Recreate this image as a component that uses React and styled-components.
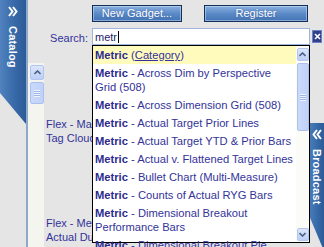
import React from 'react';
import styled, { createGlobalStyle } from 'styled-components';

const GlobalStyle = createGlobalStyle`
  html, body {
    margin: 0;
    padding: 0;
  }
  body {
    width: 324px;
    height: 247px;
    overflow: hidden;
    background: #e5e5e5;
    font-family: "Liberation Sans", Arial, sans-serif;
    font-size: 11px;
  }
  ul {
    margin: 0;
    padding: 0;
    list-style: none;
  }
`;

const options = [
  { rest: ' - Across Dim by Perspective Grid (508)' },
  { rest: ' - Across Dimension Grid (508)' },
  { rest: ' - Actual Target Prior Lines' },
  { rest: ' - Actual Target YTD & Prior Bars' },
  { rest: ' - Actual v. Flattened Target Lines' },
  { rest: ' - Bullet Chart (Multi-Measure)' },
  { rest: ' - Counts of Actual RYG Bars' },
  { rest: ' - Dimensional Breakout Performance Bars' },
  { rest: ' - Dimensional Breakout Pie (508)' },
];

const gadgets = ['Flex - Map Tag Cloud', 'Flex - Metric Actual Dual Bars'];

const Chevrons = ({ left }) => (
  <svg width="10" height="11" viewBox="0 0 10 11">
    <g
      fill="none"
      stroke="#fff"
      strokeWidth="2"
      transform={left ? 'translate(10 0) scale(-1 1)' : undefined}
    >
      <polyline points="1,1 4.5,5.5 1,10" />
      <polyline points="5,1 8.5,5.5 5,10" />
    </g>
  </svg>
);

const Arrow = ({ down }) => (
  <svg width="7" height="5" viewBox="0 0 7 5">
    <polyline
      points={down ? '0.5,1 3.5,4 6.5,1' : '0.5,4 3.5,1 6.5,4'}
      fill="none"
      stroke="#4d6185"
      strokeWidth="1.6"
    />
  </svg>
);

const App = () => {
  return (
    <Page>
      <GlobalStyle />
      <CatalogTab>
        <Chevrons />
        <TabLabel>Catalog</TabLabel>
      </CatalogTab>
      <Divider />

      <Main>
        <Toolbar>
          <ActionButton $width={90}>New Gadget...</ActionButton>
          <ActionButton $width={104}>Register</ActionButton>
        </Toolbar>

        <SearchRow>
          <SearchLabel>Search:</SearchLabel>
          <SearchField>
            <SearchInput>
              metr
              <Caret />
            </SearchInput>
            <Dropdown>
              <OptionList>
                <Option $active>
                  <Match>Metric</Match> (<u>Category</u>)
                </Option>
                {options.map((o) => (
                  <Option key={o.rest}>
                    <Match>Metric</Match>
                    {o.rest}
                  </Option>
                ))}
              </OptionList>
              <ListScroll>
                <ScrollButton $size={13}>
                  <Arrow />
                </ScrollButton>
                <Thumb $size={13} $height={68}>
                  <Grip />
                </Thumb>
                <ScrollButton $size={13} $bottom>
                  <Arrow down />
                </ScrollButton>
              </ListScroll>
            </Dropdown>
          </SearchField>
          <ClearButton>
            <svg width="7" height="7" viewBox="0 0 7 7">
              <path d="M1 1L6 6M6 1L1 6" stroke="#fff" strokeWidth="1.6" />
            </svg>
          </ClearButton>
        </SearchRow>

        <Panel>
          <PanelScroll>
            <ScrollButton $size={15}>
              <Arrow />
            </ScrollButton>
            <Thumb $size={15} $height={22}>
              <Grip />
            </Thumb>
          </PanelScroll>
          <GadgetList>
            {gadgets.map((g) => (
              <GadgetCard key={g}>
                <GadgetName>{g}</GadgetName>
              </GadgetCard>
            ))}
          </GadgetList>
        </Panel>
      </Main>

      <BroadcastTab>
        <Chevrons left />
        <TabLabel>Broadcast</TabLabel>
      </BroadcastTab>
    </Page>
  );
};

const Page = styled.div`
  position: relative;
  display: flex;
  width: 324px;
  height: 247px;
  overflow: hidden;
  background: #e5e5e5;
`;

const CatalogTab = styled.div`
  flex-shrink: 0;
  width: 26px;
  height: 124px;
  box-sizing: border-box;
  padding-top: 6px;

  display: flex;
  flex-direction: column;
  align-items: center;
  gap: 9px;

  background: linear-gradient(to right, #5283c0, #3869a8 55%, #2c5b98);
  clip-path: polygon(0 0, 100% 0, 100% 100%, 0 75%);
`;

const TabLabel = styled.span`
  writing-mode: vertical-rl;
  color: #fff;
  font-weight: 700;
  font-size: 11px;
  letter-spacing: 0.2px;
`;

const Divider = styled.div`
  flex-shrink: 0;
  width: 2px;
  background: #8ea8ca;
`;

const Main = styled.div`
  flex: 1;
  display: flex;
  flex-direction: column;
`;

const Toolbar = styled.div`
  display: flex;
  gap: 22px;
  padding: 5px 0 0 64px;
`;

const ActionButton = styled.button`
  width: ${(p) => p.$width}px;
  height: 17px;
  padding: 0;
  border: 1px solid #16305c;
  box-shadow: inset 0 0 0 1px rgba(220, 235, 255, 0.45);
  background: linear-gradient(#8bb1df, #5c8bc8 50%, #4373b3);
  color: #fff;
  font-family: "Liberation Sans", Arial, sans-serif;
  font-size: 11px;
  line-height: 15px;
  text-shadow: 0 0 2px rgba(40, 70, 130, 0.6);
  cursor: pointer;
`;

const SearchRow = styled.div`
  display: flex;
  align-items: flex-start;
  margin-top: 6px;
`;

const SearchLabel = styled.label`
  width: 64px;
  box-sizing: border-box;
  padding: 3px 4px 0 0;
  text-align: right;
  color: #333399;
  font-size: 11px;
  line-height: 14px;
`;

const SearchField = styled.div`
  position: relative;
  width: 218px;
`;

const SearchInput = styled.div`
  display: flex;
  align-items: center;
  height: 17px;
  box-sizing: border-box;
  padding-left: 2px;
  border: 1px solid #9fb5dc;
  background: #fff;
  color: #1d1d66;
  font-size: 11px;
`;

const Caret = styled.span`
  width: 1px;
  height: 12px;
  margin-left: 1px;
  background: #000;
`;

const ClearButton = styled.div`
  display: flex;
  align-items: center;
  justify-content: center;
  width: 10px;
  height: 13px;
  box-sizing: border-box;
  margin: 2px 0 0 2px;
  border: 1px solid #7080c0;
  background: #2f3f8e;
`;

const Dropdown = styled.div`
  position: absolute;
  top: 17px;
  left: 0;
  z-index: 3;
  display: flex;
  width: 218px;
  height: 198px;
  box-sizing: border-box;
  border: 1px solid #000;
  background: #fff;
`;

const OptionList = styled.ul`
  flex: 1;
  min-width: 0;
`;

const Option = styled.li`
  padding: 2px 2px 2px 2px;
  line-height: 14px;
  font-size: 11.2px;
  color: #333399;
  background: ${(p) => (p.$active ? '#fffbbd' : 'transparent')};
  cursor: default;
`;

const Match = styled.b`
  color: #2c2c8c;
`;

const ListScroll = styled.div`
  flex-shrink: 0;
  width: 13px;
  display: flex;
  flex-direction: column;
  align-items: center;
  background: #fbfbf8;
`;

const ScrollButton = styled.div`
  display: flex;
  align-items: center;
  justify-content: center;
  width: ${(p) => p.$size - 1}px;
  height: ${(p) => p.$size}px;
  box-sizing: border-box;
  margin-top: ${(p) => (p.$bottom ? 'auto' : '2px')};
  margin-bottom: ${(p) => (p.$bottom ? '1px' : '0')};
  border: 1px solid #b2c5ee;
  border-radius: 2px;
  background: linear-gradient(#dce6fc, #bccff7);
`;

const Thumb = styled.div`
  display: flex;
  align-items: center;
  justify-content: center;
  width: ${(p) => p.$size - 1}px;
  height: ${(p) => p.$height}px;
  box-sizing: border-box;
  margin-top: 2px;
  border: 1px solid #abc0ee;
  border-radius: 2px;
  background: linear-gradient(to right, #cad9fb, #c0d2fa);
`;

const Grip = styled.div`
  width: 6px;
  height: 7px;
  background: repeating-linear-gradient(#eef3ff 0 1px, #9fb6e8 1px 2px);
`;

const Panel = styled.div`
  flex: 1;
  display: flex;
  margin-top: 18px;
`;

const PanelScroll = styled.div`
  flex-shrink: 0;
  width: 16px;
  display: flex;
  flex-direction: column;
  align-items: flex-end;
  background: #f5f5ef;
`;

const GadgetList = styled.div`
  padding: 15px 0 0 2px;
`;

const GadgetCard = styled.div`
  display: flex;
  align-items: center;
  height: 106px;
`;

const GadgetName = styled.div`
  width: 70px;
  color: #333399;
  font-size: 11px;
  line-height: 14px;
`;

const BroadcastTab = styled.div`
  position: absolute;
  top: 123px;
  right: 0;
  z-index: 2;
  width: 14px;
  height: 128px;
  box-sizing: border-box;
  padding-top: 6px;

  display: flex;
  flex-direction: column;
  align-items: center;
  gap: 9px;

  background: linear-gradient(to right, #4a7bb9, #3467a6 60%, #2c5b98);
  clip-path: polygon(0 0, 100% 0, 100% 100%, 0 74%);
`;

export default App;
